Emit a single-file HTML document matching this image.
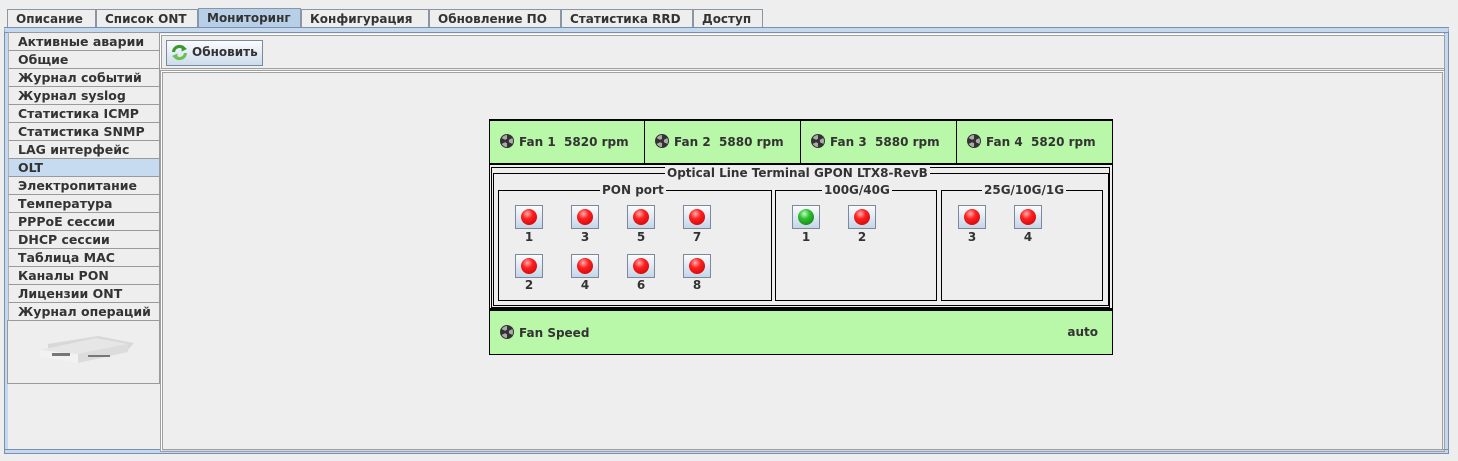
<!DOCTYPE html>
<html><head><meta charset="utf-8"><style>
*{box-sizing:border-box;margin:0;padding:0}
body{width:1458px;height:461px;background:#eeeeee;position:relative;overflow:hidden;font:bold 12px "DejaVu Sans","Liberation Sans",sans-serif;color:#333}
.a{position:absolute}
.tab{position:absolute;top:9px;height:19px;border:1px solid #8a96a6;border-bottom:none;background:#eeeeee;padding:2px 0 0 8px;white-space:nowrap}
.tab.sel{background:#b8cfe8;top:8px;height:20px}
.lt{position:absolute;left:8px;width:152px;height:19px;border:1px solid #9a9a9a;border-left-color:#b0b0b0;background:#eeeeee;padding:1px 0 0 9px;white-space:nowrap;font-size:12.5px}
.lt.sel{background:#c6dbef}
.fan{position:absolute;top:119px;height:46px;background:#b8f8a8;border:2px solid #000;border-left-width:1px;padding:13px 0 0 10px;white-space:nowrap}
.ic{display:inline-block;width:14px;height:14px;border-radius:50%;background:conic-gradient(#333 0 60deg,#aaa 60deg 120deg,#333 120deg 180deg,#aaa 180deg 240deg,#333 240deg 300deg,#aaa 300deg 360deg);border:1.5px solid #333;vertical-align:-2px;margin-right:5px;position:relative}
.ic:after{content:"";position:absolute;left:3.5px;top:3.5px;width:4px;height:4px;border-radius:50%;background:#333}
.grp{position:absolute;border:1px solid #000}
.gt{position:absolute;top:-8px;background:#eeeeee;padding:0 2px;line-height:14px;white-space:nowrap}
.led{position:absolute;width:28px;height:24px;border:1px solid #7a8a9c;background:linear-gradient(#fafcfe,#c4d6e8)}
.led i{position:absolute;left:5px;top:3px;width:16px;height:16px;border-radius:50%;background:radial-gradient(circle at 40% 30%,#ffb0b0 0,#ff2020 35%,#c00000 100%)}
.led.g i{background:radial-gradient(circle at 40% 30%,#c0ffc0 0,#30c030 35%,#107010 100%)}
.lb{position:absolute;width:28px;text-align:center}
</style></head><body>
<div class="tab" style="left:7px;width:89px">Описание</div>
<div class="tab" style="left:96px;width:102px">Список ONT</div>
<div class="tab sel" style="left:198px;width:103px">Мониторинг</div>
<div class="tab" style="left:301px;width:128px">Конфигурация</div>
<div class="tab" style="left:429px;width:132px">Обновление ПО</div>
<div class="tab" style="left:561px;width:132px">Статистика RRD</div>
<div class="tab" style="left:693px;width:70px">Доступ</div>
<div class="a" style="left:4px;top:27px;width:1445px;height:427px;border:1px solid #7a8fb0;border-top:6px solid #c4d8ee"></div>
<div class="a" style="left:4px;top:27px;width:1445px;height:1px;background:#7a8fb0"></div>
<div class="a" style="left:4px;top:32px;width:1445px;height:1px;background:#7a8fb0"></div>
<div class="a" style="left:5px;top:33px;width:3px;height:420px;background:#c4d8ee"></div>
<div class="a" style="left:1444px;top:33px;width:4px;height:420px;background:#c4d8ee;border-left:1px solid #7a8fb0"></div>
<div class="a" style="left:5px;top:449px;width:1443px;height:4px;background:#c4d8ee;border-top:1px solid #7a8fb0"></div>
<div class="lt" style="top:32px">Активные аварии</div>
<div class="lt" style="top:50px">Общие</div>
<div class="lt" style="top:68px">Журнал событий</div>
<div class="lt" style="top:86px">Журнал syslog</div>
<div class="lt" style="top:104px">Статистика ICMP</div>
<div class="lt" style="top:122px">Статистика SNMP</div>
<div class="lt" style="top:140px">LAG интерфейс</div>
<div class="lt sel" style="top:158px">OLT</div>
<div class="lt" style="top:176px">Электропитание</div>
<div class="lt" style="top:194px">Температура</div>
<div class="lt" style="top:212px">PPPoE сессии</div>
<div class="lt" style="top:230px">DHCP сессии</div>
<div class="lt" style="top:248px">Таблица MAC</div>
<div class="lt" style="top:266px">Каналы PON</div>
<div class="lt" style="top:284px">Лицензии ONT</div>
<div class="lt" style="top:302px">Журнал операций</div>
<div class="a" style="left:7px;top:320px;width:153px;height:64px;border:1px solid #9a9a9a;border-top:none">
<svg class="a" style="left:30px;top:10px" width="96" height="40" viewBox="0 0 96 40">
<polygon points="10,14 60,6 96,13 88,22 10,28" fill="#d8d8d8"/>
<polygon points="2,20 58,8 90,14 40,24" fill="#e6e6e6"/>
<polygon points="2,20 40,24 40,33 2,27" fill="#f2f2f2"/>
<polygon points="40,24 90,14 90,22 40,33" fill="#dcdcdc"/>
<rect x="14" y="23" width="18" height="3" fill="#777"/>
<rect x="50" y="25" width="22" height="2" fill="#777"/>
</svg>
</div>
<div class="a" style="left:160px;top:34px;width:1285px;height:35px;border:1px solid #a0a0a0;border-left-color:#fff;border-top-color:#fff;box-shadow:inset 1px 1px 0 #a0a0a0"></div>
<div class="a" style="left:166px;top:40px;width:97px;height:26px;border:1px solid #7a8a9c;background:linear-gradient(#fbfcfe,#cddcec);padding:4px 0 0 25px">Обновить</div>
<svg class="a" style="left:171px;top:44px" width="17" height="17" viewBox="0 0 17 17">
<path d="M2.5 8 A6 6 0 0 1 13 4.5" stroke="#3a9a2a" stroke-width="3.2" fill="none"/>
<polygon points="11,1 16,5 10.5,7.5" fill="#3a9a2a"/>
<path d="M14.5 9 A6 6 0 0 1 4 12.5" stroke="#6cc050" stroke-width="3.2" fill="none"/>
<polygon points="6,16 1,12 6.5,9.5" fill="#6cc050"/>
</svg>
<div class="a" style="left:160px;top:70px;width:1285px;height:382px;border:1px solid #a0a0a0;box-shadow:inset 1px 1px 0 #fff"></div>
<div class="a" style="left:162px;top:72px;width:1281px;height:378px;border:1px solid #a0a0a0"></div>
<div class="fan" style="left:489px;width:157px;border-left-width:1px"><span class="ic"></span>Fan 1&nbsp; 5820 rpm</div>
<div class="fan" style="left:644px;width:158px"><span class="ic"></span>Fan 2&nbsp; 5880 rpm</div>
<div class="fan" style="left:800px;width:158px"><span class="ic"></span>Fan 3&nbsp; 5880 rpm</div>
<div class="fan" style="left:956px;width:157px;border-right-width:1px"><span class="ic"></span>Fan 4&nbsp; 5820 rpm</div>
<div class="a" style="left:489px;top:163px;width:624px;height:148px;border:2px solid #000;border-width:2px 1px 3px 1px"></div>
<div class="a" style="left:491px;top:167px;width:619px;height:141px;border:1px solid #000"></div>
<div class="grp" style="left:493px;top:173px;width:616px;height:133px"><div class="gt" style="left:171px">Optical Line Terminal GPON LTX8-RevB</div></div>
<div class="grp" style="left:498px;top:190px;width:274px;height:111px"><div class="gt" style="left:101px">PON port</div></div>
<div class="grp" style="left:775px;top:190px;width:162px;height:111px"><div class="gt" style="left:46px">100G/40G</div></div>
<div class="grp" style="left:941px;top:190px;width:162px;height:111px"><div class="gt" style="left:40px">25G/10G/1G</div></div>
<div class="led" style="left:515px;top:205px"><i></i></div><div class="lb" style="left:515px;top:230px">1</div>
<div class="led" style="left:571px;top:205px"><i></i></div><div class="lb" style="left:571px;top:230px">3</div>
<div class="led" style="left:627px;top:205px"><i></i></div><div class="lb" style="left:627px;top:230px">5</div>
<div class="led" style="left:683px;top:205px"><i></i></div><div class="lb" style="left:683px;top:230px">7</div>
<div class="led" style="left:515px;top:254px"><i></i></div><div class="lb" style="left:515px;top:278px">2</div>
<div class="led" style="left:571px;top:254px"><i></i></div><div class="lb" style="left:571px;top:278px">4</div>
<div class="led" style="left:627px;top:254px"><i></i></div><div class="lb" style="left:627px;top:278px">6</div>
<div class="led" style="left:683px;top:254px"><i></i></div><div class="lb" style="left:683px;top:278px">8</div>
<div class="led g" style="left:792px;top:205px"><i></i></div><div class="lb" style="left:792px;top:230px">1</div>
<div class="led" style="left:848px;top:205px"><i></i></div><div class="lb" style="left:848px;top:230px">2</div>
<div class="led" style="left:958px;top:205px"><i></i></div><div class="lb" style="left:958px;top:230px">3</div>
<div class="led" style="left:1014px;top:205px"><i></i></div><div class="lb" style="left:1014px;top:230px">4</div>
<div class="a" style="left:489px;top:310px;width:624px;height:45px;background:#b8f8a8;border:1px solid #000;padding:14px 0 0 10px"><span class="ic"></span>Fan Speed<span class="a" style="right:14px;top:14px">auto</span></div>
</body></html>
